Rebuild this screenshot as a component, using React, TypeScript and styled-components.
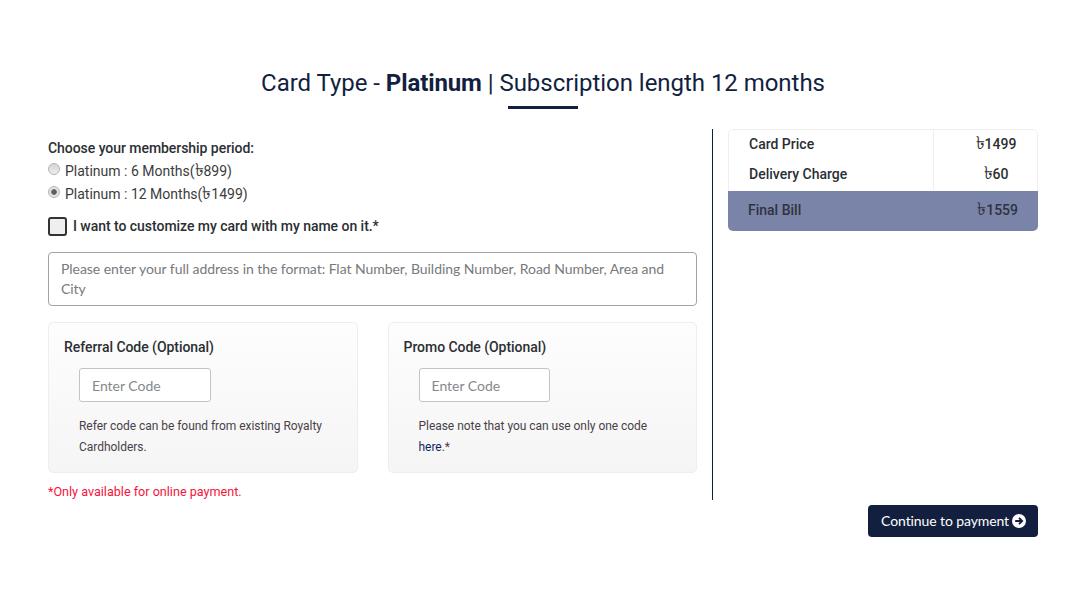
import React from 'react';
import styled, { createGlobalStyle } from 'styled-components';

const GlobalStyle = createGlobalStyle`
  html, body {
    margin: 0;
    padding: 0;
    background: #fff;
    font-family: Roboto, "Noto Sans", sans-serif;
  }
  * { box-sizing: border-box; }
`;

const App = () => {
  return (
    <Page>
      <GlobalStyle />
      <Title>
        Card Type - <b>Platinum</b> | Subscription length 12 months
      </Title>
      <TitleBar />
      <Columns>
        <LeftColumn>
          <PeriodLabel>Choose your membership period:</PeriodLabel>
          <RadioRow>
            <Radio type='radio' name='period' />
            <span>Platinum : 6 Months(<Taka>৳</Taka>899)</span>
          </RadioRow>
          <RadioRow>
            <Radio type='radio' name='period' defaultChecked />
            <span>Platinum : 12 Months(<Taka>৳</Taka>1499)</span>
          </RadioRow>
          <CustomizeRow>
            <CheckBox type='checkbox' />
            <span>I want to customize my card with my name on it.*</span>
          </CustomizeRow>
          <Address
            rows={2}
            placeholder='Please enter your full address in the format: Flat Number, Building Number, Road Number, Area and City'
          />
          <CodeGrid>
            <CodeCard>
              <CodeTitle>Referral Code (Optional)</CodeTitle>
              <CodeInput placeholder='Enter Code' />
              <CodeNote>
                Refer code can be found from existing Royalty Cardholders.
              </CodeNote>
            </CodeCard>
            <CodeCard>
              <CodeTitle>Promo Code (Optional)</CodeTitle>
              <CodeInput placeholder='Enter Code' />
              <CodeNote>
                Please note that you can use only one code <HereLink>here</HereLink>.*
              </CodeNote>
            </CodeCard>
          </CodeGrid>
          <OnlineNote>*Only available for online payment.</OnlineNote>
        </LeftColumn>
        <RightColumn>
          <BillTable>
            <BillRows>
              {BILL_ROWS.map((row) => (
                <BillRow key={row.label}>
                  <BillLabel>{row.label}</BillLabel>
                  <BillPrice><Taka>৳</Taka>{row.price}</BillPrice>
                </BillRow>
              ))}
            </BillRows>
            <FinalRow>
              <span>Final Bill</span>
              <span><Taka>৳</Taka>1559</span>
            </FinalRow>
          </BillTable>
        </RightColumn>
      </Columns>
      <Footer>
        <PayButton type='button'>
          Continue to payment
          <svg width='14' height='14' viewBox='0 0 14 14' aria-hidden='true'>
            <circle cx='7' cy='7' r='7' fill='#fff' />
            <path
              d='M3.2 7h6.6M7 3.9 10.1 7 7 10.1'
              fill='none'
              stroke='#131f3f'
              strokeWidth='1.9'
            />
          </svg>
        </PayButton>
      </Footer>
    </Page>
  );
};

const Page = styled.div`
  width: 1088px;
  height: 589px;
  overflow: hidden;
  padding: 69px 50px 0 48px;
  color: #212529;
`;

const Title = styled.h2`
  margin: 0;
  text-align: center;
  font-size: 24px;
  font-weight: 400;
  line-height: 29px;
  letter-spacing: -0.04px;
  color: #131f3f;

  b {
    font-weight: 700;
    letter-spacing: -0.1px;
  }
`;

const TitleBar = styled.div`
  width: 70px;
  height: 3px;
  margin: 8px auto 20px;
  background: #131f3f;
`;

const Columns = styled.div`
  display: flex;
  height: 371px;
`;

const LeftColumn = styled.div`
  width: 665px;
  padding: 11px 15px 0 0;
  border-right: 1px solid #131f3f;
`;

const PeriodLabel = styled.div`
  font-size: 14px;
  font-weight: 500;
  line-height: 17px;
  letter-spacing: -0.05px;
  color: #2b2f33;
  margin-bottom: 2px;
`;

const Taka = styled.span`
  font-size: 1.3em;
  font-weight: 400;
  line-height: 0;
  letter-spacing: 0;
`;

const RadioRow = styled.label`
  display: flex;
  align-items: center;
  height: 23px;
  font-size: 14px;
  color: #3c3c3c;
`;

const Radio = styled.input`
  appearance: none;
  width: 12px;
  height: 12px;
  margin: 0 5px 3px 0;
  background: linear-gradient(#d4d4d4, #eeeeee);
  border: 1px solid #b4b4b4;
  border-radius: 50%;

  &:checked {
    background: radial-gradient(circle, #5f5f5f 0 2.4px, #e4e4e4 3.2px);
  }
`;

const CustomizeRow = styled.label`
  display: flex;
  align-items: center;
  gap: 6px;
  margin-top: 12px;
  font-size: 14px;
  font-weight: 500;
  letter-spacing: -0.04px;
  color: #2b2f33;

  span {
    margin-top: -2px;
  }
`;

const CheckBox = styled.input`
  appearance: none;
  width: 19px;
  height: 19px;
  margin: 0;
  background: #efefef;
  border: 2px solid #333;
  border-radius: 3px;
`;

const Address = styled.textarea`
  display: block;
  width: 649px;
  height: 54px;
  margin-top: 16px;
  padding: 6px 12px;
  resize: none;
  overflow: hidden;
  font-family: Lato, sans-serif;
  font-size: 14px;
  line-height: 20px;
  letter-spacing: -0.05px;
  border: 1px solid #a3a3a3;
  border-radius: 4px;
  outline: none;

  &::placeholder {
    color: #77797c;
    opacity: 1;
  }
`;

const CodeGrid = styled.div`
  display: grid;
  grid-template-columns: 1fr 1fr;
  column-gap: 30px;
  margin-top: 16px;
`;

const CodeCard = styled.div`
  height: 151px;
  padding: 16px 15px 0;
  background: linear-gradient(#fdfdfd, #f5f5f5);
  border: 1px solid #eeeeee;
  border-radius: 5px;
`;

const CodeTitle = styled.div`
  font-size: 14px;
  font-weight: 500;
  line-height: 17px;
  letter-spacing: -0.05px;
  color: #2b2f33;
`;

const CodeInput = styled.input`
  display: block;
  width: 131.7px;
  height: 34px;
  margin: 12px 0 0 15px;
  padding: 0 12px;
  font-family: Lato, sans-serif;
  font-size: 14px;
  background: #fff;
  border: 1px solid #c4c4c4;
  border-radius: 3px;
  outline: none;

  &::placeholder {
    color: #85888c;
    opacity: 1;
  }
`;

const CodeNote = styled.p`
  margin: 14px 0 0 15px;
  font-size: 12px;
  line-height: 21px;
  letter-spacing: -0.04px;
  color: #4a3f4a;
`;

const HereLink = styled.a`
  color: #131f5f;
`;

const OnlineNote = styled.div`
  margin-top: 11px;
  font-size: 12.6px;
  line-height: 15px;
  color: #f5143c;
`;

const RightColumn = styled.div`
  flex: 1;
  padding-left: 15px;
`;

const BillTable = styled.div`
  width: 310px;
  overflow: hidden;
  border-radius: 5px;
`;

const BillRows = styled.div`
  padding-bottom: 1px;
  border: 1px solid #eeeeee;
  border-width: 1px 1px 0;
  border-radius: 5px 5px 0 0;
`;

const BillRow = styled.div`
  display: grid;
  grid-template-columns: 205px 1fr;
  height: 30px;
  font-size: 14px;
  font-weight: 500;
  line-height: 28px;
  color: #2b2f33;
`;

const BillLabel = styled.div`
  padding-left: 20px;
  border-right: 1px solid #eeeeee;
`;

const BillPrice = styled.div`
  padding-left: 21px;
  text-align: center;
`;

const FinalRow = styled.div`
  display: flex;
  justify-content: space-between;
  align-items: center;
  height: 40px;
  padding: 0 20px 2px;
  font-size: 14px;
  font-weight: 500;
  color: #2f3340;
  background: #7a84a8;
`;

const Footer = styled.div`
  display: flex;
  justify-content: flex-end;
  margin-top: 5px;
`;

const PayButton = styled.button`
  display: flex;
  align-items: center;
  gap: 3px;
  height: 32px;
  padding: 0 12px 2px 13px;
  font-family: Lato, sans-serif;
  font-size: 14px;
  letter-spacing: -0.1px;
  color: #fff;
  background: #131f3f;
  border: none;
  border-radius: 4px;

  svg {
    margin-top: 2px;
  }
`;

export default App;

const BILL_ROWS = [
  { label: 'Card Price', price: '1499' },
  { label: 'Delivery Charge', price: '60' },
];
